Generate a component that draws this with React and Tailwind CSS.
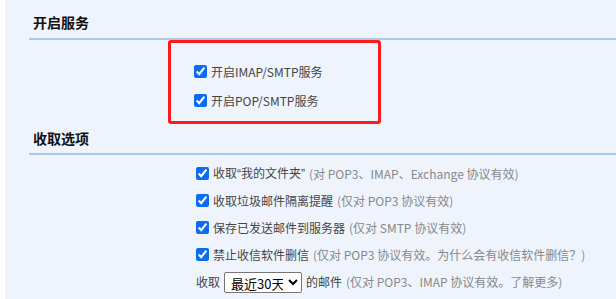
import React from "react";

const font = { fontFamily: '"Noto Sans CJK SC", "Liberation Sans", sans-serif' };

function Check({ children, note }) {
  return (
    <label className="flex items-center h-[27px] text-[12px] text-[#444] whitespace-nowrap">
      <input type="checkbox" defaultChecked className="m-0 mr-[4px] w-[13px] h-[13px] shrink-0 accent-[#0b6cf0]" />
      <span>{children}</span>
      {note && <span className="text-[#888] ml-[4px]">{note}</span>}
    </label>
  );
}

export default function App() {
  return (
    <div className="w-[616px] h-[299px] bg-white flex overflow-hidden" style={font}>
      <div className="ml-[5px] flex-1 bg-[#eff4fc] pt-[12px]">
        <div className="pl-[28px] text-[14px] font-bold text-[#111] h-[20px] leading-[20px]">开启服务</div>
        <div className="ml-[24px] mt-[6px] h-[2px] bg-[#a9c9ec]" />
        <div className="ml-[163px] w-[213px] h-[84px] border-[3px] border-[#fa1c1c] rounded-[3px] pl-[23px] pt-[15px]">
          <Check>开启IMAP/SMTP服务</Check>
          <div className="h-[2px]" />
          <Check>开启POP/SMTP服务</Check>
        </div>
        <div className="pl-[28px] mt-[4px] text-[14px] font-bold text-[#111] h-[20px] leading-[20px]">收取选项</div>
        <div className="ml-[24px] mt-[5px] h-[2px] bg-[#a9c9ec]" />
        <div className="ml-[191px] pt-[5px]">
          <Check note="(对 POP3、IMAP、Exchange 协议有效)">
            收取<span style={{ fontFamily: '"Liberation Sans", sans-serif' }}>“</span>我的文件夹<span style={{ fontFamily: '"Liberation Sans", sans-serif' }}>”</span>
          </Check>
          <Check note="(仅对 POP3 协议有效)">收取垃圾邮件隔离提醒</Check>
          <Check note="(仅对 SMTP 协议有效)">保存已发送邮件到服务器</Check>
          <Check note="(仅对 POP3 协议有效。为什么会有收信软件删信？)">禁止收信软件删信</Check>
          <div className="flex items-center h-[28px] text-[12px] text-[#444] whitespace-nowrap">
            <span>收取</span>
            <select className="ml-[4px] mr-[4px] w-[78px] h-[21px] border border-[#767676] bg-white text-[13px] text-black rounded-[2px] px-[2px]" defaultValue="30">
              <option value="30">最近30天</option>
            </select>
            <span>的邮件</span>
            <span className="text-[#888] ml-[4px]">(仅对 POP3、IMAP 协议有效。了解更多)</span>
          </div>
        </div>
      </div>
    </div>
  );
}
